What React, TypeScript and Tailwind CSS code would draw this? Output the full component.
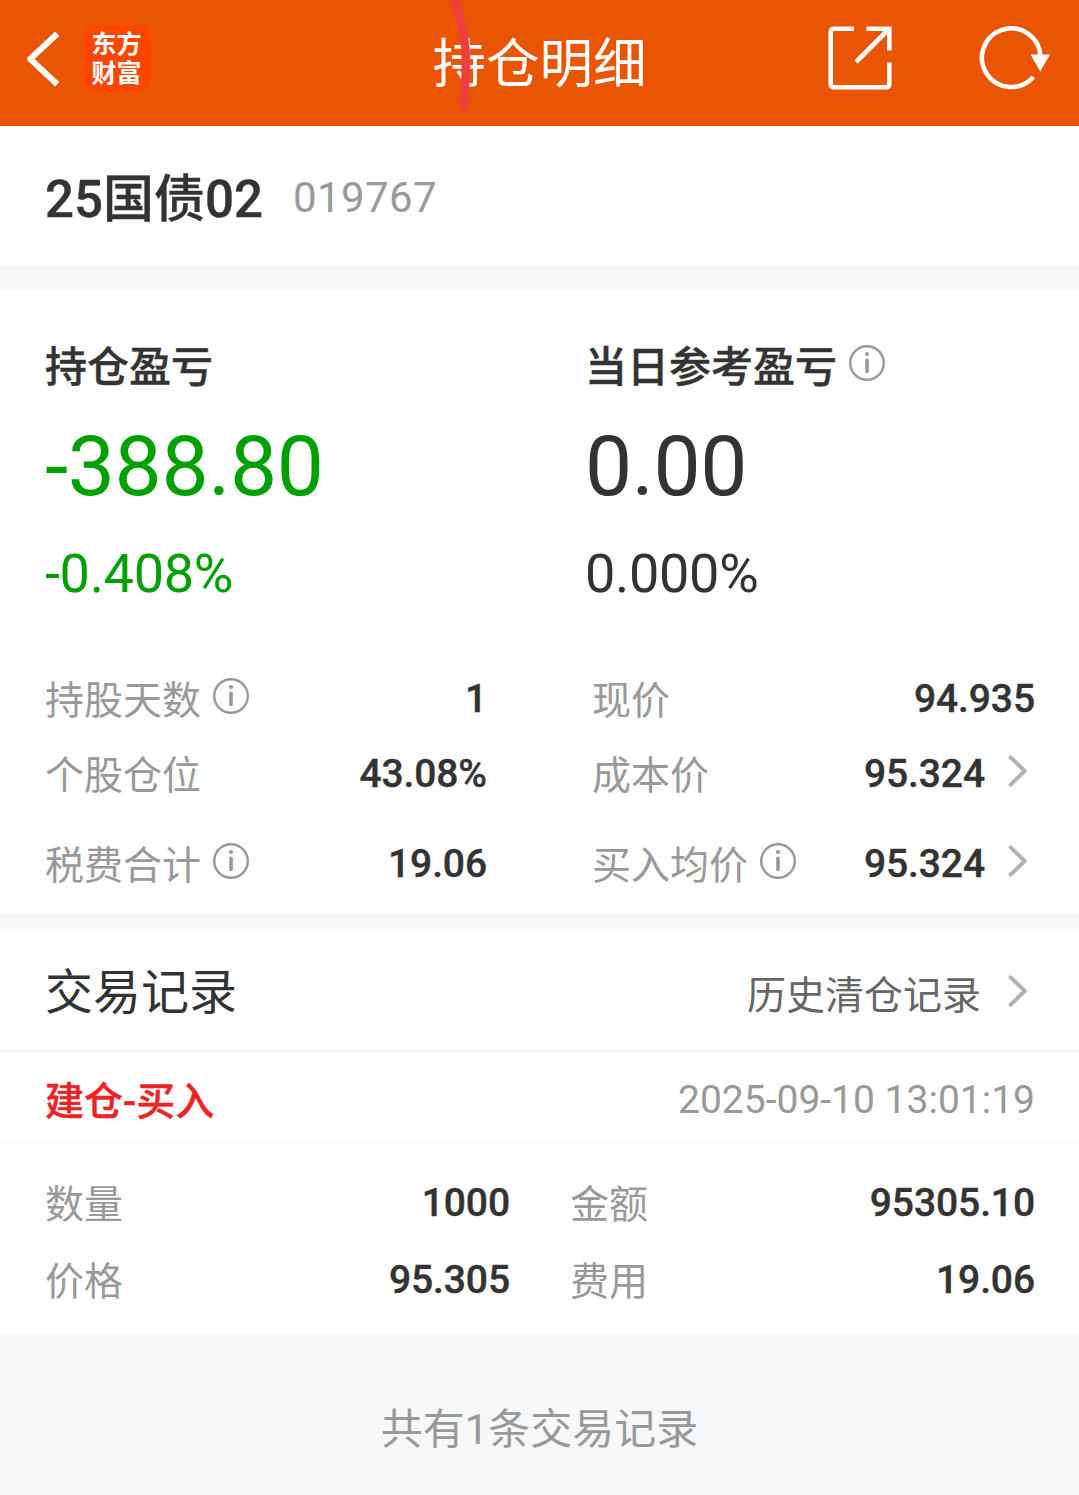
import type { ReactNode } from 'react'

const FONT = "font-['Roboto','Noto_Sans_CJK_SC',sans-serif]"
const STRONG = 'font-medium [-webkit-text-stroke:0.4px_currentColor]'

function InfoIcon() {
  return (
    <svg className="shrink-0" width="36" height="36" viewBox="0 0 36 36" fill="none" stroke="#999999">
      <circle cx="18" cy="18" r="16.8" strokeWidth="2.4" />
      <path d="M18 15.2V26.4" strokeWidth="3.6" strokeLinecap="round" />
      <circle cx="18" cy="9" r="2.1" fill="#999999" stroke="none" />
    </svg>
  )
}

function Chevron() {
  return (
    <svg className="shrink-0" width="20" height="32" viewBox="0 0 20 32" fill="none" stroke="#b2b2b2" strokeWidth="4" strokeLinecap="round" strokeLinejoin="round">
      <path d="M2.5 2.3L16.8 16L2.5 29.7" />
    </svg>
  )
}

function Header() {
  return (
    <header className="relative flex h-[126px] items-center bg-[#ea5504] text-white">
      <div className="flex flex-1 items-center pb-[9px] pl-[26px]">
        <svg width="34" height="56" viewBox="0 0 34 56" fill="none" stroke="#fff" strokeWidth="6" strokeLinejoin="round">
          <path d="M31.2 2.8L4.2 28L31.2 53.2" />
        </svg>
        <div className="ml-[23px] flex h-[67px] w-[68px] flex-col items-center justify-center rounded-[14px] bg-[#ff4500] pr-px text-[25px] leading-[29px] font-bold">
          <span>东方</span>
          <span>财富</span>
        </div>
      </div>
      <h1 className="mt-[3px] pl-[2px] text-[53.5px] leading-[60px]">持仓明细</h1>
      <div className="flex flex-1 items-center justify-end gap-[87px] pr-[28px] pb-[10px]">
        <svg width="64" height="64" viewBox="0 0 64 64" fill="none" stroke="#fff" strokeWidth="4.6">
          <path d="M26 2.7H6Q2.7 2.7 2.7 6V58Q2.7 61.3 6 61.3H58Q61.3 61.3 61.3 58V36.5" />
          <path d="M38.5 2.7H61.3V24.5M60.5 3.5L28 36" />
        </svg>
        <svg width="72" height="64" viewBox="0 0 72 64" fill="none">
          <path d="M61.5 30A29.3 29.3 0 1 0 54.3 51" stroke="#fff" strokeWidth="4.6" />
          <path d="M51.5 28.5H71L61.2 45.5Z" fill="#fff" />
        </svg>
      </div>
      {/* pen stroke across the title */}
      <svg className="absolute top-0 left-[440px]" width="40" height="126" viewBox="0 0 40 126" fill="none">
        <path d="M13 -4C22 20 26 42 26 62C26 80 24 92 23.7 106" stroke="#f03e3e" strokeWidth="8.5" strokeLinecap="round" />
      </svg>
    </header>
  )
}

interface SummaryProps {
  title: string
  amount: string
  percent: string
  color: string
  info?: boolean
}

function Summary({ title, amount, percent, color, info }: SummaryProps) {
  return (
    <div className="pt-[48px]">
      <div className="flex h-[60px] items-center gap-3">
        <span className={`text-[42px] leading-[60px] ${STRONG}`}>{title}</span>
        {info && <div className="-mt-[11px]"><InfoIcon /></div>}
      </div>
      <div className={`mt-[19px] text-[84px] leading-[100px] tracking-[-0.4px] ${color}`}>{amount}</div>
      <div className={`mt-[27px] text-[54px] leading-[60px] tracking-[-0.3px] ${color}`}>{percent}</div>
    </div>
  )
}

interface CellProps {
  label: string
  value: string
  info?: boolean
  link?: boolean
}

function Cell({ label, value, info, link }: CellProps) {
  return (
    <div className="flex h-[75px] items-center">
      <span className="pt-[4px] text-[#999999]">{label}</span>
      {info && <div className="-mt-[5px] ml-3"><InfoIcon /></div>}
      <span className={`ml-auto tracking-[-0.1px] ${STRONG}`}>{value}</span>
      {link && <div className="-mt-[5px] mr-[7px] ml-[23px]"><Chevron /></div>}
    </div>
  )
}

function Columns({ className, children }: { className: string; children: ReactNode }) {
  return <div className={`grid bg-white pr-[44px] pl-[45px] text-[39px] leading-[60px] ${className}`}>{children}</div>
}

export default function App() {
  return (
    <div className={`min-h-[1495px] w-[1079px] bg-[#f7f8fa] text-[#333333] ${FONT}`}>
      <Header />

      <section className="flex h-[140px] items-center bg-white pl-[45px]">
        <span className={`mt-[7px] text-[51px] leading-[60px] ${STRONG}`}>25国债02</span>
        <span className="mt-[3px] ml-[30px] text-[42px] leading-[60px] tracking-[0.4px] text-[#999999]">019767</span>
      </section>

      <section className="mt-6 grid h-[353px] grid-cols-[540px_1fr] bg-white pl-[45px]">
        <Summary title="持仓盈亏" amount="-388.80" percent="-0.408%" color="text-[#00a000]" />
        <Summary title="当日参考盈亏" amount="0.00" percent="0.000%" color="text-[#333333]" info />
      </section>

      <Columns className="mt-px h-[270px] grid-cols-[442px_443px] content-start justify-between pt-[17px]">
        <Cell label="持股天数" value="1" info />
        <Cell label="现价" value="94.935" />
        <Cell label="个股仓位" value="43.08%" />
        <Cell label="成本价" value="95.324" link />
        <div className="pt-[15px]"><Cell label="税费合计" value="19.06" info /></div>
        <div className="pt-[15px]"><Cell label="买入均价" value="95.324" info link /></div>
      </Columns>

      <section className="mt-[15px] flex h-[120px] items-center bg-white pr-[51px] pl-[45px]">
        <h2 className="mt-[7px] text-[48px] leading-[60px]">交易记录</h2>
        <span className="mt-[14px] mr-[27px] ml-auto text-[39px] leading-[60px] text-[#666666]">历史清仓记录</span>
        <div className="mt-1"><Chevron /></div>
      </section>

      <section className="mt-1 flex h-[90px] items-center justify-between bg-white pt-[3px] pr-[44px] pl-[45px] text-[39px] leading-[60px]">
        <span className={`pt-[4px] text-[#ee2222] ${STRONG}`}>建仓-买入</span>
        <span className="text-[#999999]">2025-09-10 13:01:19</span>
      </section>

      <Columns className="mt-px h-[190px] grid-cols-[465px_465px] content-start justify-between gap-y-[2px] pt-[21px]">
        <Cell label="数量" value="1000" />
        <Cell label="金额" value="95305.10" />
        <Cell label="价格" value="95.305" />
        <Cell label="费用" value="19.06" />
      </Columns>

      <footer className="pt-[66px] text-center text-[42px] leading-[60px] text-[#999999]">共有1条交易记录</footer>
    </div>
  )
}
